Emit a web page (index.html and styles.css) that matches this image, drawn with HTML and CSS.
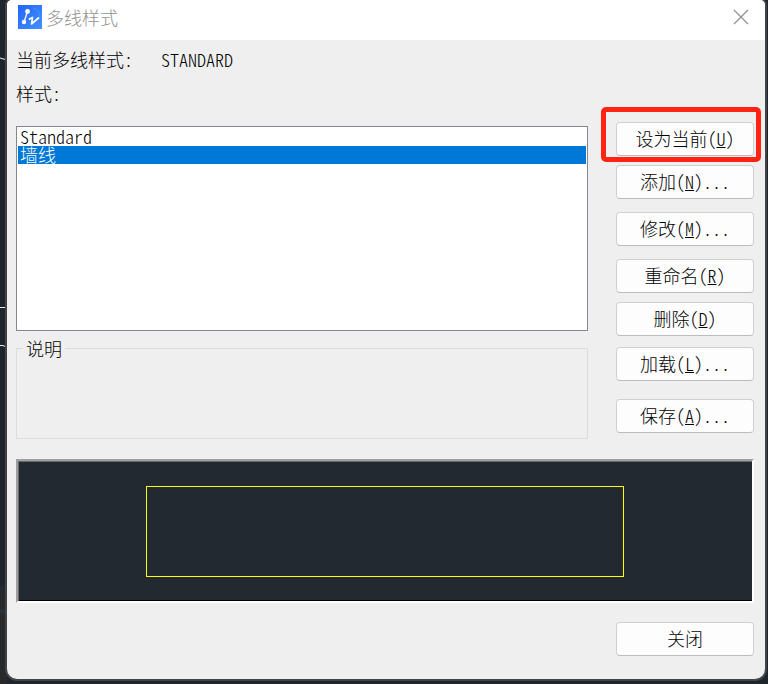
FILE: index.html
```html
<!DOCTYPE html>
<html lang="zh-CN">
<head>
<meta charset="utf-8">
<meta name="viewport" content="width=device-width, initial-scale=1">
<title>多线样式</title>
<link rel="stylesheet" href="styles.css">
</head>
<body>
<svg class="canvas-lines" width="7" height="684" viewBox="0 0 7 684" aria-hidden="true">
  <path d="M0 586h7v98H0z" fill="#27292b"/>
  <path d="M0 609h7v4H0z" fill="#27323d"/>
  <path d="M0 58l7 2M0 307.500h6l1-1M0 345.500h3l4 2" fill="none" stroke="#f0f0f0"/>
</svg>
<main class="dialog">
  <header class="titlebar">
    <svg class="logo" width="24" height="24" viewBox="0 0 24 24" aria-hidden="true">
      <defs>
        <linearGradient id="tile" x1="0" y1="0" x2="1" y2="1">
          <stop offset="0" stop-color="#2366f6"/>
          <stop offset="1" stop-color="#4290ff"/>
        </linearGradient>
      </defs>
      <path d="M0 0h24v24H0z" fill="url(#tile)"/>
      <path d="M15 3a9 9 0 0 1 7 10" fill="none" stroke="#4d91fb"/>
      <path d="M9.500 6.500L6 17" fill="none" stroke="#fff" stroke-width="1.300"/>
      <circle cx="9.500" cy="6.500" r="2.400" fill="#fff"/>
      <circle cx="6" cy="17" r="2.200" fill="#fff"/>
      <path d="M11.500 14l3-1.500-1 6.500 7-6" fill="none" stroke="#fff" stroke-width="1.700" stroke-linecap="round" stroke-linejoin="round"/>
    </svg>
    <h1 class="title">多线样式</h1>
    <button class="dismiss" type="button" aria-label="关闭窗口">
      <svg width="16" height="16" viewBox="0 0 16 16" aria-hidden="true"><path d="M1 1l14 14M15 1L1 15" fill="none" stroke="#929292" stroke-width="1.300"/></svg>
    </button>
  </header>
  <div class="content">
    <div class="columns">
      <section class="styles-panel">
        <p class="current"><span>当前多线样式:</span><span>STANDARD</span></p>
        <label class="list-label" for="style-list">样式:</label>
        <select class="style-list" id="style-list" size="11">
          <option>Standard</option>
          <option selected>墙线</option>
        </select>
        <fieldset class="description">
          <legend>说明</legend>
        </fieldset>
      </section>
      <div class="actions">
        <div class="highlighted"><button class="button" type="button">设为当前(<u>U</u>)</button></div>
        <button class="button space-small" type="button">添加(<u>N</u>)...</button>
        <button class="button space-large" type="button">修改(<u>M</u>)...</button>
        <button class="button space-large" type="button">重命名(<u>R</u>)</button>
        <button class="button space-small" type="button">删除(<u>D</u>)</button>
        <button class="button space-medium" type="button">加载(<u>L</u>)...</button>
        <button class="button space-wide" type="button">保存(<u>A</u>)...</button>
      </div>
    </div>
    <div class="preview"><div class="preview-line"></div></div>
    <footer class="footer"><button class="button" type="button">关闭</button></footer>
  </div>
</main>
</body>
</html>
```
FILE: styles.css
```css
* {
  box-sizing: border-box;
}

body {
  margin: 0;
  padding: 0 3px 5px 7px;
  background: #1e252d;
  color: #000;
  font: 300 18px/24px "Noto Sans CJK SC", sans-serif;
  font-feature-settings: "hwid";
}

.canvas-lines {
  position: absolute;
  top: 0;
  left: 0;
}

.dialog {
  position: relative;
  overflow: hidden;
  border-radius: 5px 5px 10px 10px;
  background: #efefef;
  box-shadow: 0 0 0 2px #414546;
}

.titlebar {
  display: flex;
  align-items: center;
  height: 40px;
  padding: 0 16px 6px 11px;
  background: #fff;
}

.title {
  flex: 1;
  margin: 0 0 0 4px;
  color: #929292;
  font-size: 18px;
  font-weight: 300;
}

.dismiss {
  display: flex;
  padding: 0;
  border: 0;
  background: none;
}

.content {
  padding: 7px 11px 23px 9px;
}

.columns {
  display: grid;
  grid-template-columns: 1fr 138px;
  gap: 28px;
}

.styles-panel {
  display: flex;
  flex-direction: column;
}

.current {
  display: flex;
  gap: 28px;
  margin: 0 0 10px;
}

.list-label {
  margin-bottom: 21px;
}

.style-list {
  height: 205px;
  padding: 1px;
  border: 1px solid #828790;
  border-radius: 0;
  outline: 0;
  background: #fff;
  font: 300 18px/18px "Noto Sans CJK SC", sans-serif;
  font-feature-settings: "hwid";
  overflow: hidden;
}

.style-list option {
  display: flex;
  align-items: center;
  height: 18px;
  min-height: 18px;
  padding: 0 2px 2px;
  color: #000;
  font-weight: 300;
}

.style-list option:checked {
  background: #0078d7 linear-gradient(#0078d7, #0078d7);
  color: #fff;
  -webkit-text-fill-color: #fff;
}

.description {
  height: 103px;
  margin: 5px 0 0;
  padding: 0 6px;
  border: 1px solid #dcdcdc;
}

.description legend {
  padding: 0 3px;
}

.actions {
  padding-top: 75px;
}

.button {
  display: block;
  width: 138px;
  height: 34px;
  padding: 0 0 2px;
  border: 1px solid #d0d0d0;
  border-bottom-color: #bcbcbc;
  border-radius: 4px;
  background: #fdfdfd;
  color: #000;
  font: 300 18px/24px "Noto Sans CJK SC", sans-serif;
  font-feature-settings: "hwid";
}

.highlighted {
  position: relative;
}

.highlighted::after {
  content: "";
  position: absolute;
  inset: -15px -7px -6px -15px;
  border: 5px solid #ff2314;
  border-radius: 5px;
  pointer-events: none;
}

.space-small {
  margin-top: 9px;
}

.space-medium {
  margin-top: 11px;
}

.space-large {
  margin-top: 13px;
}

.space-wide {
  margin-top: 18px;
}

.preview {
  display: flex;
  align-items: center;
  justify-content: center;
  height: 144px;
  margin: 20px 0 19px;
  border: 2px solid;
  border-color: #a0a0a0 #fff #fff #a0a0a0;
  background: #222930;
  box-shadow: inset 1px 1px #696969, inset 0 -1px #000;
}

.preview-line {
  width: 65%;
  height: 91px;
  border: 1px solid #ff0;
}

.footer {
  display: flex;
  justify-content: flex-end;
}
```
